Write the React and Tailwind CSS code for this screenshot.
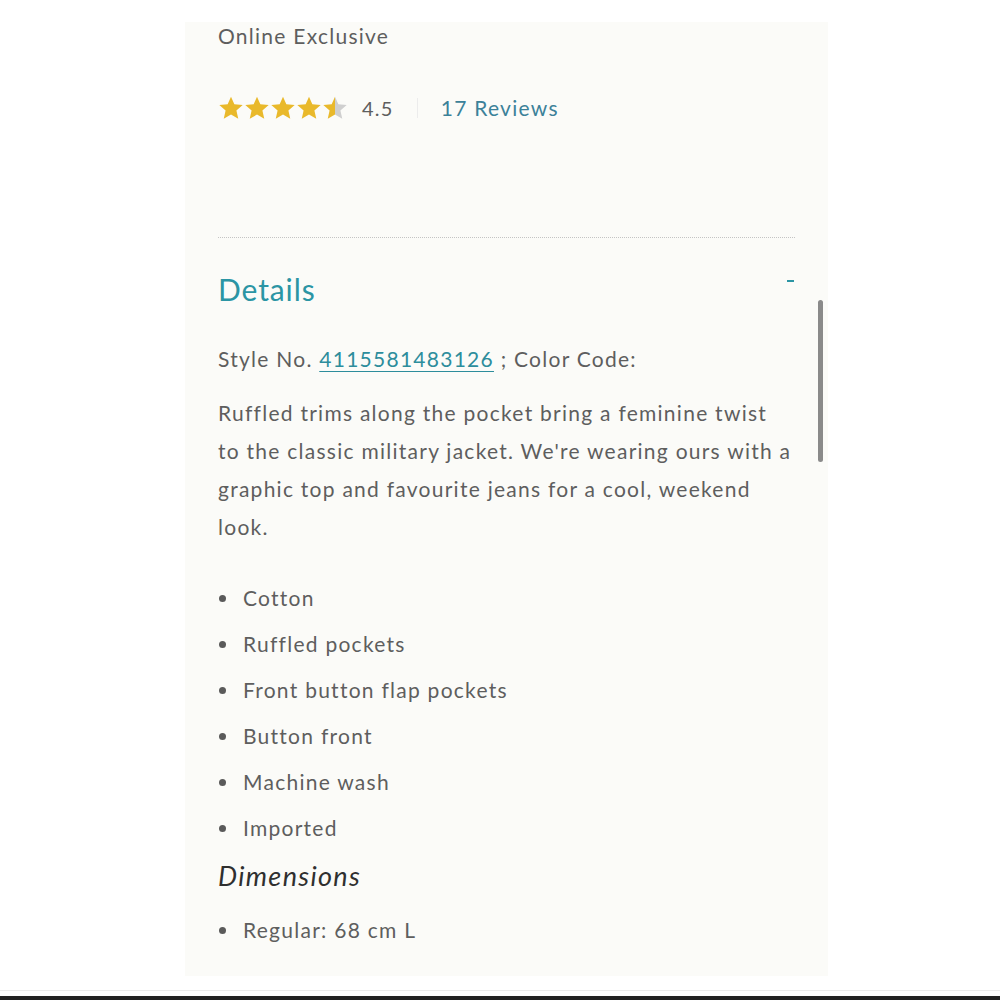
import React from 'react';

const bodyFont = { fontFamily: 'Lato, "Open Sans", sans-serif' };

const Star = ({ fill = 1 }) => {
  const id = `half-${Math.round(fill * 100)}`;
  return (
    <svg width="26" height="26" viewBox="0 0 24 24" className="shrink-0">
      <defs>
        <linearGradient id={id}>
          <stop offset={`${fill * 100}%`} stopColor="#e9b92b" />
          <stop offset={`${fill * 100}%`} stopColor="#cfcfcf" />
        </linearGradient>
      </defs>
      <path
        d="M12 1.5l3.1 7.1 7.7.7-5.8 5.1 1.7 7.6L12 18.1 5.3 22l1.7-7.6L1.2 9.3l7.7-.7z"
        fill={`url(#${id})`}
      />
    </svg>
  );
};

const features = [
  'Cotton',
  'Ruffled pockets',
  'Front button flap pockets',
  'Button front',
  'Machine wash',
  'Imported',
];

const Bullet = ({ children }) => (
  <li className="flex items-center h-[46px]">
    <span className="w-[7px] h-[7px] rounded-full bg-[#5a5a5a] ml-[1px] mr-[17px]" />
    <span>{children}</span>
  </li>
);

export default function App() {
  return (
    <div className="min-h-[1000px] bg-white flex flex-col" style={bodyFont}>
      <div className="pt-[22px] pl-[185px]">
        <div className="relative w-[643px] h-[954px] bg-[#fbfbf8] pl-[33px] pr-[28px] text-[#5e5e5e] text-[21px] tracking-[0.06em]">
          <div className="h-[28px] leading-[28px]">Online Exclusive</div>

          <div className="mt-[44px] h-[28px] flex items-center">
            <div className="flex">
              <Star />
              <Star />
              <Star />
              <Star />
              <Star fill={0.5} />
            </div>
            <span className="ml-[14px] text-[20px]">4.5</span>
            <span className="mx-[23px] w-px h-[20px] bg-[#ececec]" />
            <span className="text-[#3b8199]">17 Reviews</span>
          </div>

          <div className="mt-[115px] mr-[5px] border-t border-dotted border-[#c4c4c4]" />

          <div className="mt-[33px] mr-[5px] flex justify-between items-start">
            <h2 className="h-[36px] leading-[36px] text-[30px] text-[#2b95a4] tracking-[0.03em]">Details</h2>
            <span className="mt-[9px] mr-[1px] w-[7px] h-[2px] bg-[#2b95a4]" />
          </div>

          <div className="mt-[33px] h-[38px] leading-[38px]">
            Style No.{' '}
            <a className="text-[#2d8d9c] underline underline-offset-[4px] decoration-1">4115581483126</a>
            {' '}; Color Code:
          </div>

          <p className="mt-[16px] w-[575px] leading-[38px]">
            Ruffled trims along the pocket bring a feminine twist to the classic military jacket.
            We're wearing ours with a graphic top and favourite jeans for a cool, weekend look.
          </p>

          <ul className="mt-[29px]">
            {features.map((f) => (
              <Bullet key={f}>{f}</Bullet>
            ))}
          </ul>

          <div className="mt-[7px] h-[36px] leading-[36px] italic text-[27px] text-[#2f2f2f] tracking-[0.05em]">
            Dimensions
          </div>

          <ul className="mt-[13px]">
            <Bullet>Regular: 68 cm L</Bullet>
          </ul>

          {/* scroll thumb */}
          <div className="absolute right-[5px] top-[278px] w-[5px] h-[162px] rounded-full bg-[#8a8a8a]" />
        </div>
      </div>
      <div className="mt-auto border-t border-[#ececec] h-[6px]" />
      <div className="h-[4px] bg-[#222]" />
    </div>
  );
}
